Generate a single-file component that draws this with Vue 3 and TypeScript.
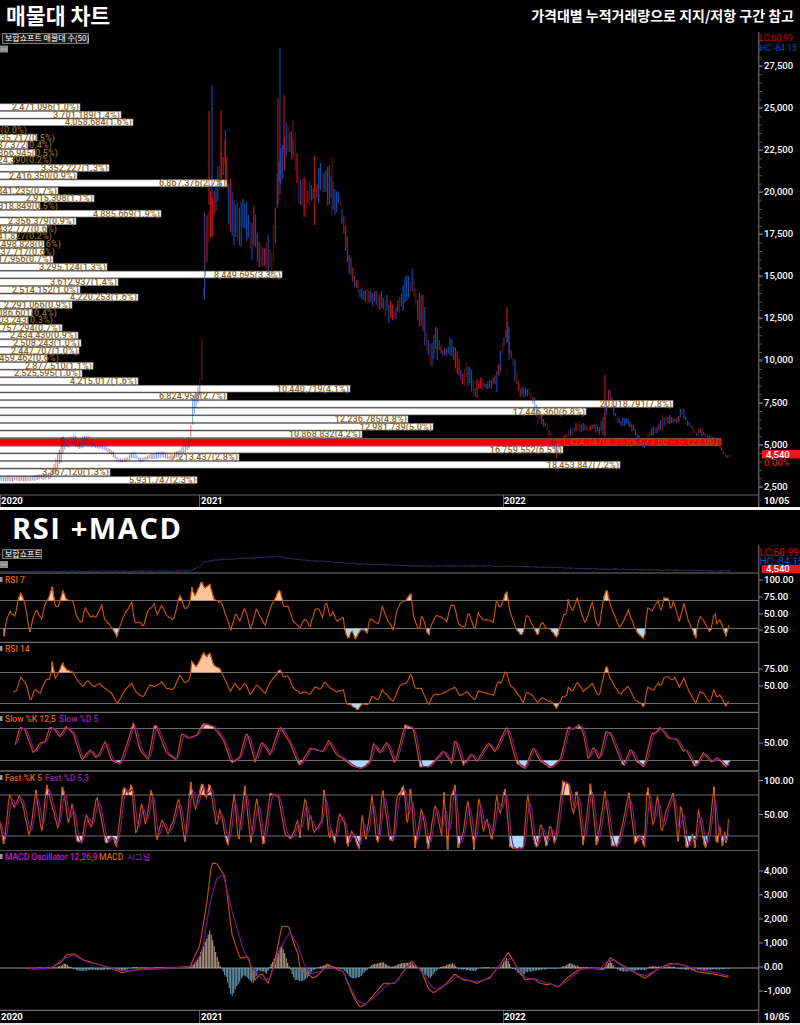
<script setup lang="ts">
type Pt = [number, number]

const rnd = (i: number): number => {
  const v = Math.sin(i * 12.9898 + 4.1) * 43758.5453
  return v - Math.floor(v)
}

const interp = (pts: Pt[], x: number): number => {
  if (x <= pts[0][0]) return pts[0][1]
  for (let i = 1; i < pts.length; i++) {
    if (x <= pts[i][0]) {
      const [x0, y0] = pts[i - 1]
      const [x1, y1] = pts[i]
      return y0 + ((y1 - y0) * (x - x0)) / (x1 - x0)
    }
  }
  return pts[pts.length - 1][1]
}

const dense = (pts: Pt[], amp: number, seed: number, step = 1.5): Pt[] => {
  const out: Pt[] = []
  let i = 0
  for (let x = pts[0][0]; x <= pts[pts.length - 1][0]; x += step) {
    out.push([x, interp(pts, x) + (rnd(i + seed) - 0.5) * amp])
    i++
  }
  return out
}

const smooth = (pts: Pt[], win: number, shift: number): Pt[] =>
  pts.map((p, i) => {
    const from = Math.max(0, i - win + 1)
    const part = pts.slice(from, i + 1)
    return [p[0] + shift, part.reduce((s, q) => s + q[1], 0) / part.length] as Pt
  })

const linePath = (pts: Pt[]): string =>
  pts.map((p, i) => `${i ? 'L' : 'M'}${p[0].toFixed(1)} ${p[1].toFixed(1)}`).join('')

const above = (pts: Pt[], g: number): string =>
  pts.filter((p) => p[1] < g).map((p) => `M${p[0].toFixed(1)} ${g}V${p[1].toFixed(1)}`).join('')
const below = (pts: Pt[], g: number): string =>
  pts.filter((p) => p[1] > g).map((p) => `M${p[0].toFixed(1)} ${g}V${p[1].toFixed(1)}`).join('')

// anchors read off magnified crops: v coordinates at 3x with an origin
const zoomed = (a: number[][], ox: number, oy: number): Pt[] => a.map(([x, y]) => [ox + x / 3, oy + y / 3] as Pt)

// ---------- Volume profile ----------
interface VolRow { t: string; bar: number; end: number; red?: boolean }
const volRaw: [string, number, number?][] = [
  ['2,471,096(1.0%)', 80], ['3,701,189(1.4%)', 121], ['4,058,684(1.6%)', 133], ['50(0.0%)', 0, 27],
  ['1,235,717(0.5%)', 37, 55], ['1,037,372(0.4%)', 28, 52], ['1,366,945(0.5%)', 35, 58], ['624,390(0.2%)', 13, 52],
  ['3,352,227(1.3%)', 109], ['2,416,350(0.9%)', 77], ['6,867,376(2.7%)', 227], ['1,841,235(0.7%)', 58],
  ['2,915,308(1.1%)', 94], ['1,318,849(0.5%)', 40, 58], ['4,885,669(1.9%)', 161], ['2,356,379(0.9%)', 76],
  ['1,432,777(0.6%)', 47, 57], ['641,827(0.2%)', 17, 52], ['1,498,828(0.6%)', 44, 61], ['1,437,717(0.6%)', 44, 55],
  ['1,717,956(0.7%)', 53], ['3,295,124(1.3%)', 107], ['8,449,695(3.3%)', 282], ['3,612,937(1.4%)', 118],
  ['2,514,152(1.0%)', 80], ['4,220,253(1.6%)', 138], ['2,291,066(0.9%)', 72], ['1,086,601(0.4%)', 32, 57],
  ['803,243(0.3%)', 28, 53], ['1,757,294(0.7%)', 62], ['2,434,430(0.9%)', 78], ['2,508,243(1.0%)', 81],
  ['2,447,707(1.0%)', 79], ['1,459,462(0.6%)', 47, 59], ['2,877,510(1.1%)', 93], ['2,525,595(1.0%)', 82],
  ['4,215,017(1.6%)', 138], ['10,440,719(4.1%)', 350], ['6,824,958(2.7%)', 227], ['20,018,791(7.8%)', 673],
  ['17,446,360(6.8%)', 586], ['12,236,785(4.8%)', 408], ['12,981,739(5.0%)', 433], ['10,868,832(4.2%)', 362],
  ['21,424,347(8.3%)(5,573.60 ~ 5,123.00)', 721, 718], ['16,759,552(6.5%)', 563], ['7,213,437(2.8%)', 239],
  ['18,453,847(7.2%)', 620], ['3,367,120(1.3%)', 110], ['5,931,747(2.3%)', 197]
]
const volRows = volRaw.map((r, i): VolRow & { y: number } => ({
  t: r[0],
  bar: r[1],
  end: r[2] ?? r[1] - 1,
  red: r[0].startsWith('21,424'),
  y: 107 + i * 7.61
}))

// ---------- Candles ----------
const range: [number, number, number][] = [
  [0, 476, 481], [30, 476, 481], [50, 472, 479], [53, 465, 475], [58, 452, 470], [62, 432, 462], [66, 438, 448],
  [73, 433, 445], [80, 440, 450], [85, 433, 446], [95, 442, 448], [105, 445, 450], [113, 450, 456], [118, 458, 463],
  [125, 458, 462], [134, 450, 458], [140, 458, 462], [150, 454, 459], [162, 450, 458], [170, 455, 460], [180, 448, 458],
  [189, 437, 448], [191, 420, 440], [193, 390, 425], [195, 388, 410], [197, 390, 408], [200, 375, 395], [202, 338, 375],
  [203, 300, 300], [206, 200, 270], [216, 170, 220], [220, 150, 200], [225, 130, 180], [228, 170, 230], [235, 195, 260],
  [240, 190, 250], [245, 190, 240], [250, 220, 260], [255, 200, 260], [260, 240, 270], [267, 230, 280], [272, 240, 285],
  [275, 195, 250], [278, 165, 200], [284, 115, 180], [288, 110, 160], [292, 120, 165], [296, 135, 190], [300, 175, 210],
  [305, 175, 220], [310, 175, 210], [315, 190, 205], [320, 155, 205], [325, 165, 200], [330, 165, 210], [335, 190, 215],
  [340, 190, 205], [343, 205, 240], [348, 240, 270], [355, 270, 290], [360, 285, 300], [370, 290, 305], [380, 290, 310],
  [390, 295, 325], [395, 310, 320], [405, 275, 310], [413, 265, 300], [418, 295, 325],
  [422, 287, 330], [430, 340, 375], [437, 319, 360], [443, 348, 358], [452, 333, 363], [463, 370, 387], [468, 353, 387],
  [475, 385, 400], [478, 373, 397], [487, 382, 388], [497, 368, 393], [503, 332, 360], [507, 315, 343], [510, 340, 360],
  [515, 358, 383], [520, 385, 397], [530, 385, 400], [537, 402, 423], [545, 420, 427], [552, 432, 443], [557, 447, 457],
  [563, 437, 442], [570, 427, 437], [580, 418, 433], [588, 427, 433], [593, 422, 430], [600, 427, 435], [605, 400, 437],
  [609, 377, 400], [615, 407, 420], [620, 418, 427], [627, 415, 427], [633, 422, 433], [638, 433, 442], [645, 442, 450],
  [650, 427, 437], [658, 423, 435], [663, 410, 433], [670, 415, 423], [678, 417, 425], [682, 403, 420], [687, 418, 425],
  [692, 423, 432], [697, 432, 437], [700, 423, 437], [705, 432, 437], [718, 438, 445], [723, 450, 453], [727, 455, 460],
  [730, 454, 455]
]
const tops: Pt[] = range.map((r) => [r[0], r[1]])
const bots: Pt[] = range.map((r) => [r[0], r[2]])
const cBlue: string[] = []
const cRed: string[] = []
const cDark: string[] = []
let ci = 0
for (let x = 0; x <= 730; x += 1.8) {
  ci++
  const t = interp(tops, x)
  const b = interp(bots, x)
  const k = x > 206 ? 0.4 : 0.25
  const y1 = t + (b - t) * rnd(ci) * k
  const y2 = b - (b - t) * rnd(ci + 500) * k
  const seg = `M${x.toFixed(1)} ${y1.toFixed(1)}V${(y2 + 0.5).toFixed(1)}`
  const c = rnd(ci + 900)
  if (c < 0.54) cBlue.push(seg)
  else if (c < 0.8) cRed.push(seg)
  else cDark.push(seg)
}
cBlue.push('M204.5 213V300', 'M212 85V205', 'M280 48V195', 'M225.5 130V182', 'M509 327V360')
cRed.push('M209 111V205', 'M221 110V185', 'M284 95V150', 'M278 98V205', 'M605 375V437', 'M314.5 156V225', 'M507 307V343', 'M556.7 447V458')
cDark.push('M202 338V380', 'M293 120V160', 'M332 157V215')
const candleBlue = cBlue.join('')
const candleRed = cRed.join('')
const candleDark = cDark.join('')

const priceTicks: [string, number][] = [
  ['27,500', 66], ['25,000', 108], ['22,500', 150], ['20,000', 192], ['17,500', 234], ['15,000', 276],
  ['12,500', 318], ['10,000', 360], ['7,500', 403], ['5,000', 445], ['2,500', 487]
]
const minorTicks: number[] = []
for (let y = 41; y < 495; y += 8.42) minorTicks.push(y)
const minorPath = minorTicks.map((y) => `M759 ${y.toFixed(1)}H762`).join('')

// ---------- Indicator series ----------
const rsi7All: Pt[] = [
  ...zoomed([[13,380],[15,350],[22,325],[30,305],[45,320],[55,270],[62,250],[75,280],[90,370],[100,320],[110,300],[125,330],[135,280],[145,265],[157,232],[165,285],[175,290],[190,240],[200,270],[220,275],[230,320],[245,340],[255,290],[270,320],[290,320],[305,285],[315,330],[335,350],[350,380],[370,320],[395,275],[405,340],[420,335],[430,350],[445,300],[465,280],[470,320],[485,285],[500,315],[520,330],[540,255],[555,300],[570,280],[575,230],[585,260],[605,215],[615,235],[630,220],[640,265],[665,280],[680,320],[692,358],[708,310],[720,335],[735,290],[752,360],[770,295],[795,350],[815,285],[840,238],[850,285],[865,290],[880,335],[895,350]], 0, 510),
  ...zoomed([[0,175],[15,145],[30,170],[45,120],[55,115],[68,145],[78,92],[90,140],[100,125],[110,155],[130,145],[135,180],[145,210],[155,180],[165,205],[185,175],[205,190],[207,150],[220,150],[235,165],[247,110],[260,145],[280,180],[290,125],[300,100],[320,90],[332,65],[340,135],[358,185],[365,130],[385,198],[395,160],[410,135],[430,145],[440,155],[452,105],[465,110],[475,165],[495,170],[505,125],[525,180],[535,130],[550,150],[580,155],[590,85],[600,115],[620,60],[630,125],[650,180],[668,198],[680,130],[700,170],[714,198]], 300, 570),
  ...zoomed([[0,168],[8,155],[20,178],[30,175],[50,205],[62,165],[72,132],[80,130],[86,80],[92,120],[100,118],[112,83],[122,120],[135,160],[158,95],[165,145],[178,172],[185,115],[200,50],[208,95],[220,130],[240,175],[265,120],[285,175],[300,195],[313,208],[322,110],[335,125],[355,90],[362,125],[372,85],[385,85],[392,120],[400,95],[418,155],[432,98],[445,150],[467,205],[478,140],[490,150],[510,188],[518,155],[525,122],[530,160],[540,150],[558,197],[568,160]], 540, 570)
]

const rsi14Base: Pt[] = [
  ...zoomed([[40,548],[50,540],[62,502],[78,520],[92,575],[105,535],[120,550],[140,505],[150,510],[157,455],[165,505],[175,490],[188,460],[200,480],[218,485],[235,515],[250,530],[262,510],[280,530],[300,520],[315,535],[335,550],[352,580],[375,540],[395,520],[410,550],[430,560],[450,525],[465,530],[485,515],[500,535],[520,540],[540,495],[555,520],[570,510],[575,455],[590,470],[610,428],[620,440],[630,428],[640,465],[660,475],[680,520],[692,545],[705,520],[720,540],[735,518],[752,555],[770,525],[795,550],[815,510],[840,478],[850,500],[865,500],[880,535],[895,545]], 0, 510),
  ...zoomed([[0,370],[15,365],[30,375],[45,350],[60,360],[75,335],[90,355],[110,365],[130,360],[140,400],[155,405],[172,420],[190,400],[205,405],[215,380],[235,390],[247,360],[265,380],[280,395],[300,345],[320,338],[334,310],[345,355],[365,355],[385,405],[400,375],[430,370],[450,360],[465,350],[480,378],[500,365],[525,390],[535,365],[560,368],[582,375],[592,335],[603,340],[618,300],[630,345],[650,365],[670,398],[680,365],[700,378],[714,400]], 300, 570),
  ...zoomed([[0,388],[8,382],[20,392],[35,395],[50,415],[68,380],[80,378],[86,345],[92,362],[100,360],[113,335],[130,365],[158,338],[165,360],[178,378],[185,345],[200,283],[208,320],[225,350],[240,372],[265,348],[285,390],[300,398],[313,412],[322,350],[340,360],[355,340],[362,350],[372,323],[385,320],[395,330],[405,322],[418,350],[432,325],[445,360],[467,400],[480,365],[490,370],[510,398],[522,360],[530,380],[540,375],[558,408],[568,390]], 540, 570)
]

const slowBase: Pt[] = [
  ...zoomed([[45,705],[60,650],[75,660],[100,730],[120,700],[135,695],[150,650],[165,660],[180,680],[198,650],[220,670],[245,750],[270,720],[290,745],[315,695],[335,752],[360,762],[385,690],[400,638],[420,720],[445,750],[465,640],[500,730],[530,750],[545,670],[565,685],[590,675],[610,640],[640,650],[670,690],[695,760],[720,740],[740,665],[765,755],[785,695],[810,735],[840,650],[870,700],[895,760]], 0, 510),
  ...zoomed([[0,585],[30,535],[70,545],[85,510],[110,555],[135,570],[160,590],[185,595],[210,575],[220,520],[240,550],[260,515],[285,580],[315,465],[340,475],[360,590],[388,590],[430,542],[455,580],[465,505],[490,585],[515,550],[530,575],[565,518],[585,545],[620,470],[650,580],[675,595],[700,532]], 300, 570),
  ...zoomed([[0,572],[30,593],[50,578],[62,565],[85,470],[100,478],[118,463],[130,490],[145,570],[160,530],[178,570],[198,485],[210,488],[250,590],[272,535],[290,575],[312,590],[335,490],[345,490],[360,472],[385,505],[410,508],[430,545],[440,540],[465,592],[490,548],[515,578],[530,563],[560,592],[568,575]], 540, 570)
]

const fastBase: Pt[] = [
  ...zoomed([[0,150],[12,230],[28,70],[42,110],[58,75],[70,110],[88,200],[108,60],[125,190],[140,40],[155,100],[175,180],[188,40],[205,160],[217,95],[230,210],[245,215],[258,130],[275,175],[290,75],[305,150],[318,225],[335,195],[350,225],[370,50],[385,70],[395,35],[408,200],[425,100],[437,165],[455,50],[470,215],[485,150],[505,190],[520,150],[535,80],[555,220],[572,35],[585,120],[607,35],[618,90],[628,35],[650,170],[660,115],[683,230],[703,60],[715,215],[735,45],[752,220],[770,80],[790,230],[810,70],[835,75],[855,190],[873,205],[893,150]], 0, 770),
  ...zoomed([[0,200],[5,145],[17,75],[25,180],[30,125],[42,190],[65,150],[73,48],[88,215],[95,170],[103,222],[118,132],[135,155],[142,232],[155,178],[178,238],[186,125],[197,215],[217,70],[228,205],[236,215],[247,48],[268,205],[280,215],[290,80],[303,60],[312,42],[322,175],[332,42],[345,235],[365,112],[385,235],[405,98],[425,200],[432,65],[443,238],[452,80],[465,45],[473,235],[490,185],[503,85],[522,235],[537,75],[550,190],[560,140],[575,215],[590,70],[600,135],[615,48],[630,230],[650,235],[670,230],[683,65],[700,205],[712,235],[722,155],[740,238]], 300, 770),
  ...zoomed([[0,155],[15,225],[38,35],[55,35],[70,140],[80,50],[100,225],[122,35],[140,230],[165,60],[185,225],[200,230],[215,175],[237,65],[255,225],[270,190],[283,235],[292,35],[310,175],[322,65],[335,190],[350,115],[370,70],[385,225],[392,95],[410,235],[428,190],[435,235],[445,115],[465,235],[478,180],[493,40],[500,235],[510,165],[518,235],[525,180],[530,235],[538,100]], 550, 770)
]

const macdBase: Pt[] = [
  ...zoomed([[80,595],[100,597],[150,595],[185,575],[200,553],[225,552],[250,570],[290,582],[330,593],[365,608],[420,598],[470,597],[530,592],[570,590],[600,525],[620,400],[635,280],[650,280],[675,320],[695,490],[720,565],[745,560],[762,632],[785,610],[805,640],[825,570],[845,470],[865,468],[885,530],[895,555]], 0, 770),
  ...zoomed([[0,595],[20,610],[40,625],[60,610],[80,582],[100,592],[130,605],[160,680],[180,712],[200,700],[225,670],[250,640],[285,640],[310,605],[335,573],[365,605],[385,655],[400,668],[430,650],[465,612],[490,630],[510,632],[530,640],[570,622],[600,585],[625,547],[650,590],[675,630],[700,625],[720,640],[745,645]], 300, 770),
  ...zoomed([[0,640],[25,652],[50,625],[90,595],[130,595],[160,600],[180,563],[200,575],[240,600],[285,625],[320,600],[360,580],[400,585],[440,605],[490,612],[538,622]], 550, 770)
]
const signalBase: Pt[] = [
  ...zoomed([[80,595],[150,595],[190,567],[220,555],[260,575],[320,590],[370,603],[430,598],[530,593],[575,590],[605,550],[630,400],[650,325],[670,315],[695,420],[730,540],[755,590],[790,630],[810,625],[840,535],[870,485],[895,530]], 0, 770),
  ...zoomed([[0,545],[15,590],[35,610],[60,605],[85,590],[130,605],[150,650],[170,690],[195,703],[225,680],[260,645],[290,635],[320,590],[340,578],[370,610],[395,650],[410,658],[445,640],[470,620],[500,630],[530,635],[570,625],[605,575],[635,565],[660,605],[680,625],[710,628],[745,640]], 300, 770),
  ...zoomed([[0,640],[25,650],[55,630],[95,597],[150,595],[170,575],[190,570],[230,598],[285,618],[330,595],[375,580],[415,590],[450,600],[500,608],[538,618]], 550, 770)
]
const histBase: Pt[] = [
  ...zoomed([[80,595],[170,592],[195,580],[220,597],[235,603],[280,600],[350,598],[365,603],[400,592],[450,594],[570,592],[590,575],[610,530],[630,480],[645,540],[662,595],[665,597],[680,625],[695,682],[710,650],[730,615],[745,625],[760,640],[775,600],[800,610],[820,570],[845,525],[870,597],[885,630],[895,630]], 0, 770),
  ...zoomed([[0,635],[20,625],[40,600],[60,590],[80,583],[100,590],[130,598],[155,627],[180,620],[200,600],[220,582],[250,578],[275,590],[300,580],[330,577],[350,590],[365,605],[390,625],[410,600],[425,590],[460,580],[475,597],[500,600],[525,603],[540,593],[600,592],[620,565],[635,595],[645,600],[665,618],[680,605],[720,600],[745,597]], 300, 770),
  ...zoomed([[0,595],[30,595],[60,580],[90,590],[130,595],[165,597],[180,570],[195,595],[220,605],[285,600],[300,590],[370,590],[385,597],[440,600],[540,597]], 550, 770)
]

const rsi7 = dense(rsi7All, 2, 11)
const rsi14 = dense(rsi14Base, 1.2, 23)
const slowK = dense(slowBase, 0.6, 37)
const slowD = smooth(slowK, 3, 0.4)
const fastK = dense(fastBase, 2.5, 51, 1.2)
const fastD = smooth(fastK, 4, 0.2)
const macd = dense(macdBase, 0.3, 71)
const signal = dense(signalBase, 0.2, 83)
const hist = dense(histBase, 1.2, 97)

const histUp = above(hist, 968)
const histDown = below(hist, 968)
const macdLine = linePath(macd)
const signalLine = linePath(signal)

const miniPts: Pt[] = [[0,571.5],[190,571],[200,566.5],[204,562],[215,560],[240,558.5],[280,556.7],[300,560],[360,564],[420,566],[507,566],[600,569],[720,571],[731,570.5]]
const miniLine = linePath(dense(miniPts, 0.8, 7))

const macdTicks: Tick[] = [
  { t: '4,000', y: 871 }, { t: '3,000', y: 895 }, { t: '2,000', y: 919 },
  { t: '1,000', y: 943 }, { t: '0.00', y: 967 }, { t: '-1,000', y: 991 }
]

// ---------- Panels ----------
interface Legend { t: string; x: number; c: string }
interface Tick { t: string; y: number }
interface Panel {
  y0: number
  h: number
  sep: number
  guides: number[]
  ups: string
  downs: string
  lines: { d: string; c: string }[]
  legend: Legend[]
  ticks: Tick[]
}
const orange = '#cc5206'
const purple = '#7f1694'
const panels: Panel[] = [
  {
    y0: 574, h: 69, sep: 642.5, guides: [600.5, 628.5],
    ups: above(rsi7, 600.5), downs: below(rsi7, 628.5),
    lines: [{ d: linePath(rsi7), c: orange }],
    legend: [{ t: 'RSI 7', x: 5, c: '#e06000' }],
    ticks: [{ t: '100.00', y: 580 }, { t: '75.00', y: 597 }, { t: '50.00', y: 614 }, { t: '25.00', y: 630 }]
  },
  {
    y0: 643, h: 70, sep: 712.5, guides: [672.5, 703.5],
    ups: above(rsi14, 672.5), downs: below(rsi14, 703.5),
    lines: [{ d: linePath(rsi14), c: orange }],
    legend: [{ t: 'RSI 14', x: 5, c: '#e06000' }],
    ticks: [{ t: '75.00', y: 669 }, { t: '50.00', y: 686 }]
  },
  {
    y0: 713, h: 58.5, sep: 771, guides: [728.5, 760.5],
    ups: above(slowK, 728.5), downs: below(slowK, 760.5),
    lines: [{ d: linePath(slowK), c: orange }, { d: linePath(slowD), c: purple }],
    legend: [{ t: 'Slow %K 12,5', x: 5, c: '#e06000' }, { t: 'Slow %D 5', x: 59, c: '#a020a8' }],
    ticks: [{ t: '50.00', y: 743 }]
  },
  {
    y0: 771.5, h: 79.5, sep: 850.5, guides: [794.5, 835.5],
    ups: above(fastK, 794.5), downs: below(fastK, 835.5),
    lines: [{ d: linePath(fastK), c: orange }, { d: linePath(fastD), c: purple }],
    legend: [{ t: 'Fast %K 5', x: 5, c: '#e06000' }, { t: 'Fast %D 5,3', x: 45, c: '#a020a8' }],
    ticks: [{ t: '100.00', y: 780 }, { t: '50.00', y: 814 }]
  }
]
</script>

<template>
  <div class="page">
    <header class="head">
      <h1 class="title">매물대 차트</h1>
      <p class="sub">가격대별 누적거래량으로 지지/저항 구간 참고</p>
    </header>

    <svg class="chart" width="800" height="477" viewBox="0 30 800 477">
      <g v-for="r in volRows" :key="r.t + 'a'">
        <rect v-if="r.bar > 0" x="-2" :y="r.y - 3.2" :width="r.bar + 2" height="6.6" :fill="r.red ? '#f00000' : '#fff'" stroke="#707070" stroke-width="0.9" />
      </g>
      <path :d="candleBlue" stroke="#0f48a8" stroke-width="1.2" fill="none" />
      <path :d="candleRed" stroke="#b81414" stroke-width="1.2" fill="none" />
      <path :d="candleDark" stroke="#640c0c" stroke-width="1.2" fill="none" />
      <g v-for="r in volRows" :key="r.t + 'b'">
        <rect v-if="r.bar > 0" x="-2" :y="r.y - 3" :width="r.bar + 2" height="6.2" :fill="r.red ? '#f00000' : '#fff'" opacity="0.55" />
      </g>
      <g class="vol">
        <text v-for="r in volRows" :key="r.t" :x="r.end" :y="r.y + 3.1" text-anchor="end" :fill="r.red ? '#b5480e' : '#8a6626'">{{ r.t }}</text>
      </g>

      <rect x="2.5" y="33.5" width="86" height="10" fill="#1c1c1c" stroke="#777" />
      <text class="wid" x="5" y="41.4">보합쇼프트 매물대 수(50)</text>
      <rect x="0" y="45.5" width="8" height="7" fill="#8a8a8a" />
      <path d="M1.5 49H6.5" stroke="#dcdcdc" stroke-dasharray="1 1" />

      <path d="M0 495H758" stroke="#666" />
      <path d="M758.7 32V508" stroke="#5a5a5a" stroke-width="1.5" />
      <path d="M199.5 495V508M503.5 495V508M0.5 495V508" stroke="#666" />
      <path :d="minorPath" stroke="#555" />
      <g class="axis">
        <g v-for="t in priceTicks" :key="t[0]">
          <path :d="`M759 ${t[1]}H763`" stroke="#888" />
          <text x="764" :y="t[1] + 3.2">{{ t[0] }}</text>
        </g>
      </g>
      <text class="lc" x="759.5" y="41" fill="#d00000">LC:60.99</text>
      <text class="lc" x="759.5" y="50.5" fill="#0a4cc0">HC:-84.15</text>
      <rect x="762" y="450" width="38" height="8.5" fill="#e8181c" />
      <text class="tag" x="766" y="457.6">4,540</text>
      <text class="tag red" x="764" y="465.5">0.00%</text>
      <g class="date">
        <text x="1" y="504">2020</text>
        <text x="201" y="504">2021</text>
        <text x="504" y="504">2022</text>
        <text x="764" y="504">10/05</text>
      </g>
    </svg>

    <div class="divider"></div>

    <h2 class="title2">RSI +MACD</h2>

    <svg class="chart" width="800" height="29" viewBox="0 545 800 29">
      <path :d="miniLine" stroke="#0f3c90" fill="none" stroke-width="0.9" />
      <path :d="miniLine" stroke="#7c1010" fill="none" stroke-width="0.9" stroke-dasharray="3 6" />
      <rect x="2.5" y="549.5" width="39" height="9" fill="#1c1c1c" stroke="#777" />
      <text class="wid" x="5" y="557">보합쇼프트</text>
      <rect x="0" y="561" width="8" height="7" fill="#8a8a8a" />
      <path d="M1.5 564.5H6.5" stroke="#dcdcdc" stroke-dasharray="1 1" />
      <path d="M0 573H758" stroke="#777" />
      <path d="M758.7 545V574" stroke="#5a5a5a" stroke-width="1.5" />
      <text class="lc big" x="759.5" y="556" fill="#d00000">LC:60.99</text>
      <text class="lc big" x="759.5" y="565" fill="#0a4cc0">HC:-84.15</text>
      <rect x="762" y="565" width="38" height="8" fill="#e8181c" />
      <text class="tag" x="766" y="572.3">4,540</text>
    </svg>

    <svg v-for="p in panels" :key="p.y0" class="chart" width="800" :height="p.h" :viewBox="`0 ${p.y0} 800 ${p.h}`">
      <path v-for="g in p.guides" :key="g" :d="`M0 ${g}H758`" stroke="#6a6a6a" />
      <path :d="p.ups" stroke="#fbc49c" stroke-width="1.6" fill="none" />
      <path :d="p.downs" stroke="#a8dcf6" stroke-width="1.6" fill="none" />
      <path v-for="l in p.lines" :key="l.c" :d="l.d" :stroke="l.c" stroke-width="1.15" fill="none" />
      <path :d="`M0 ${p.sep}H758`" stroke="#707070" stroke-width="1.4" />
      <path :d="`M758.7 ${p.y0}V${p.y0 + p.h}`" stroke="#5a5a5a" stroke-width="1.5" />
      <rect x="0" :y="p.y0 + 3" width="2.5" height="5" fill="#999" />
      <g class="legend">
        <text v-for="l in p.legend" :key="l.t" :x="l.x" :y="p.y0 + 9" :fill="l.c">{{ l.t }}</text>
      </g>
      <g class="axis">
        <g v-for="t in p.ticks" :key="t.t">
          <path :d="`M759 ${t.y}H763`" stroke="#888" />
          <text x="764" :y="t.y + 3.2">{{ t.t }}</text>
        </g>
      </g>
    </svg>

    <svg class="chart" width="800" height="160" viewBox="0 851 800 160">
      <path d="M0 968H758" stroke="#9a9a9a" />
      <path :d="histUp" stroke="#c9aa94" stroke-width="1" fill="none" />
      <path :d="histDown" stroke="#6ea6c0" stroke-width="1" fill="none" />
      <path :d="macdLine" stroke="#cc5206" stroke-width="1.1" fill="none" />
      <path :d="signalLine" stroke="#7c1690" stroke-width="1.1" fill="none" />
      <path d="M0 1010.5H758" stroke="#707070" stroke-width="1.4" />
      <path d="M758.7 851V1011" stroke="#5a5a5a" stroke-width="1.5" />
      <rect x="0" y="854" width="2.5" height="5" fill="#999" />
      <g class="legend">
        <text x="5" y="860" fill="#d010d8">MACD Oscillator 12,26,9</text>
        <text x="99" y="860" fill="#e06000">MACD</text>
        <text x="127" y="860" fill="#8a1a9a">시그널</text>
      </g>
      <g class="axis">
        <g v-for="t in macdTicks" :key="t.t">
          <path :d="`M759 ${t.y}H763`" stroke="#888" />
          <text x="764" :y="t.y + 3.2">{{ t.t }}</text>
        </g>
      </g>
    </svg>

    <svg class="chart" width="800" height="12" viewBox="0 1011 800 12">
      <path d="M758.7 1011V1023M199.5 1011V1023M503.5 1011V1023" stroke="#5a5a5a" />
      <g class="date">
        <text x="1" y="1020">2020</text>
        <text x="201" y="1020">2021</text>
        <text x="504" y="1020">2022</text>
        <text x="764" y="1020">10/05</text>
      </g>
    </svg>

    <div class="strip"></div>
  </div>
</template>

<style scoped>
.page {
  width: 800px;
  height: 1025px;
  background: #000;
  color: #fff;
  display: flex;
  flex-direction: column;
  overflow: hidden;
  font-family: "Noto Sans CJK KR", "Noto Sans", sans-serif;
}
.head {
  height: 30px;
  flex: none;
  display: flex;
  justify-content: space-between;
  align-items: center;
  padding: 0 6px;
}
.title {
  margin: 0;
  font-size: 21.6px;
  font-weight: 700;
  line-height: 28px;
  color: #fff;
}
.sub {
  margin: 0;
  font-size: 14px;
  font-weight: 700;
  color: #fff;
  white-space: nowrap;
}
.chart {
  display: block;
  flex: none;
}
.divider {
  flex: none;
  height: 3px;
  background: #f4f4f4;
}
.title2 {
  flex: none;
  height: 35px;
  margin: 0;
  padding-left: 12px;
  font-family: "Open Sans", sans-serif;
  font-size: 29px;
  font-weight: 700;
  letter-spacing: 1.6px;
  line-height: 35px;
  color: #fff;
  white-space: nowrap;
}
.strip {
  flex: none;
  height: 2px;
  background: #e8e8e8;
}
text {
  font-family: Roboto, "Noto Sans CJK KR", sans-serif;
}
.vol text {
  font-size: 9px;
  font-weight: 500;
  letter-spacing: 0.1px;
}
.wid {
  font-family: "Noto Sans CJK KR", sans-serif;
  font-size: 8px;
  fill: #fff;
}
.axis text {
  font-size: 9.5px;
  fill: #fff;
  font-weight: 500;
}
.lc {
  font-size: 8.5px;
}
.lc.big {
  font-size: 10px;
}
.tag {
  font-size: 9.5px;
  font-weight: 500;
  fill: #fff;
}
.tag.red {
  fill: #d81818;
}
.date text {
  font-size: 9.5px;
  font-weight: 700;
  fill: #fff;
}
.legend text {
  font-size: 8.5px;
  font-weight: 500;
}
</style>

<style>
html,
body {
  background: #000;
}
</style>
